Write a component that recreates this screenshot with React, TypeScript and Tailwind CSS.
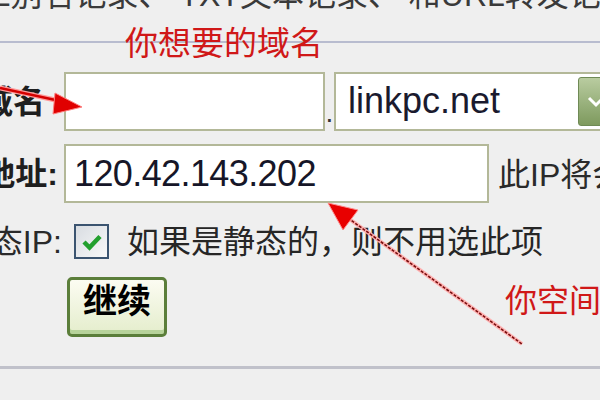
import React from 'react';

const FONT = { fontFamily: '"Liberation Sans", "Noto Sans CJK SC", sans-serif' };

function Label({ text, pad }: { text: string; pad: string }) {
  return (
    <div className={`w-[64px] shrink-0 flex justify-end whitespace-nowrap text-[32px] leading-[32px] font-bold text-[#1e1e1e] ${pad}`}>
      {text}
    </div>
  );
}

function Arrows() {
  return (
    <svg className="absolute inset-0 pointer-events-none" width="600" height="400" viewBox="0 0 600 400">
      {/* arrow into the domain field */}
      <line x1="0" y1="88" x2="60" y2="101" stroke="#ff9a9a" strokeWidth="5" />
      <line x1="0" y1="88" x2="60" y2="101" stroke="#d40000" strokeWidth="2.5" />
      <polygon points="82,107 55,93 53,114" fill="#e00000" stroke="#ff8080" strokeWidth="1" />
      {/* arrow up to the IP field */}
      <line x1="348" y1="218" x2="522" y2="344" stroke="#ffb0b0" strokeWidth="4" />
      <line x1="348" y1="218" x2="522" y2="344" stroke="#7a1010" strokeWidth="1.6" strokeDasharray="3 1.5" />
      <polygon points="328,203 358,210 343,230" fill="#e80000" stroke="#ff8a8a" strokeWidth="1" />
    </svg>
  );
}

export default function App() {
  return (
    <div className="relative w-[600px] h-[400px] overflow-hidden bg-[#efefef]" style={FONT}>
      {/* top cut-off text */}
      <div className="h-[32px] mt-[-21px] ml-[-105px] whitespace-nowrap text-[32px] leading-[32px] text-[#3a3a3a]">
        CNAME别名记录、 TXT文本记录、 和URL转发记录
      </div>
      <div className="mt-[30px] h-[2px] bg-[#b8bccf]" />

      {/* form */}
      <div className="mt-[29px] flex flex-col">
        {/* row 1: domain */}
        <div className="flex items-center h-[59px]">
          <Label text="域名" pad="pr-[19px]" />
          <div className="w-[261px] h-[59px] shrink-0 border-2 border-[#b3b898] bg-white" />
          <div className="w-[9px] shrink-0 self-end pb-[4px] text-[28px] leading-[28px] text-[#333] text-center">.</div>
          <div className="w-[300px] h-[59px] shrink-0 border-2 border-[#b3b898] bg-white flex items-center">
            <div className="w-[242px] shrink-0 pl-[12px] text-[36px] leading-[40px] text-[#1a1a2e] pb-[2px]">linkpc.net</div>
            <div className="w-[36px] h-[49px] shrink-0 rounded-[3px] border border-[#6f8a55] bg-gradient-to-b from-[#b9cca0] to-[#7e9a5e] flex items-center justify-center">
              <svg width="20" height="14" viewBox="0 0 20 14">
                <path d="M3 3 L10 10 L17 3" fill="none" stroke="#ffffff" strokeWidth="3" />
              </svg>
            </div>
          </div>
        </div>

        {/* row 2: ip address */}
        <div className="mt-[13px] flex items-center h-[59px]">
          <Label text="地址:" pad="pr-[6px]" />
          <div className="w-[425px] h-[59px] shrink-0 border-2 border-[#b3b898] bg-white flex items-center pl-[8px]">
            <span className="text-[36px] leading-[40px] tracking-[-0.6px] text-[#161628]">120.42.143.202</span>
          </div>
          <div className="ml-[9px] whitespace-nowrap text-[32px] leading-[32px] text-[#2a2a2a] pt-[3px]">
            此IP将会被解析到你的域名
          </div>
        </div>

        {/* row 3: dynamic ip */}
        <div className="mt-[21px] flex items-center h-[35px]">
          <div className="w-[64px] shrink-0 flex justify-end whitespace-nowrap text-[32px] leading-[32px] text-[#2a2a2a] pr-[2px]">
            动态IP:
          </div>
          <div className="ml-[10px] w-[35px] h-[35px] shrink-0 border-2 border-[#3b5470] bg-gradient-to-br from-[#d9dde2] to-[#f8f8f8] flex items-center justify-center">
            <svg width="22" height="18" viewBox="0 0 22 18">
              <path d="M3 9 L8.5 14.5 L19 3.5" fill="none" stroke="#22a02e" strokeWidth="4.5" strokeLinejoin="miter" />
            </svg>
          </div>
          <div className="ml-[18px] whitespace-nowrap text-[32px] leading-[32px] text-[#262626]">
            如果是静态的，则不用选此项
          </div>
        </div>

        {/* row 4: continue button */}
        <div className="mt-[18px] pl-[67px]">
          <button className="w-[100px] h-[60px] rounded-[5px] border-[3px] border-[#5b7e3a] bg-gradient-to-b from-[#fcfcf2] to-[#e4edcc] shadow-[inset_0_-4px_0_#b7d39a] flex justify-center pt-[2px]">
            <span className="text-[34px] leading-[38px] font-bold text-black">继续</span>
          </button>
        </div>

        <div className="mt-[29px] h-[3px] bg-[#c0c1ca]" />
      </div>

      {/* red annotations */}
      <div className="absolute left-[125px] top-[27px] whitespace-nowrap text-[33px] leading-[33px] text-[#d01818]">
        你想要的域名
      </div>
      <div className="absolute left-[505px] top-[285px] whitespace-nowrap text-[32px] leading-[32px] text-[#d01818]">
        你空间
      </div>
      <Arrows />
    </div>
  );
}
